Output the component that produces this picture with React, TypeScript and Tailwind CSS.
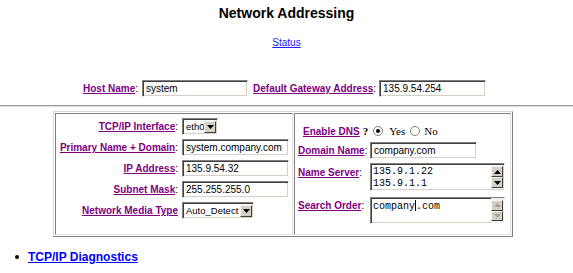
import React from "react";

const Label: React.FC<{ children: React.ReactNode }> = ({ children }) => (
  <a className="font-bold text-[#800080] underline underline-offset-[1px] cursor-pointer">{children}</a>
);

const Field: React.FC<{ className?: string; children?: React.ReactNode }> = ({ className = "", children }) => (
  <div
    className={
      "h-[17px] bg-white border border-t-[#808080] border-l-[#808080] border-b-white border-r-white shadow-[inset_1px_1px_0_#404040,inset_-1px_-1px_0_#d4d0c8] pl-[3px] text-[10px] leading-[15px] whitespace-nowrap overflow-hidden " +
      className
    }
  >
    {children}
  </div>
);

const ArrowBtn: React.FC<{ up?: boolean; disabled?: boolean }> = ({ up, disabled }) => (
  <div className="w-[12px] h-[12px] bg-[#d4d0c8] border border-t-[#f4f4f4] border-l-[#f4f4f4] border-b-[#404040] border-r-[#404040] flex items-center justify-center">
    <svg width="7" height="4" viewBox="0 0 7 4">
      {up ? (
        <path d="M0 4 L3.5 0 L7 4 Z" fill={disabled ? "#a0a0a0" : "#000"} />
      ) : (
        <path d="M0 0 L3.5 4 L7 0 Z" fill={disabled ? "#a0a0a0" : "#000"} />
      )}
    </svg>
  </div>
);

const Select: React.FC<{ className?: string; value: string }> = ({ className = "", value }) => (
  <div
    className={
      "h-[17px] bg-white border border-t-[#808080] border-l-[#808080] border-b-white border-r-white shadow-[inset_1px_1px_0_#404040,inset_-1px_-1px_0_#d4d0c8] flex items-center pl-[3px] pr-[1px] text-[9.5px] " +
      className
    }
  >
    <span className="flex-1 leading-[13px] whitespace-nowrap overflow-hidden">{value}</span>
    <ArrowBtn />
  </div>
);

const Radio: React.FC<{ checked?: boolean }> = ({ checked }) => (
  <span className="w-[10px] h-[10px] rounded-full bg-white border border-[#808080] flex items-center justify-center">
    {checked && <span className="w-[4px] h-[4px] rounded-full bg-black" />}
  </span>
);

const TextArea: React.FC<{ lines: React.ReactNode[]; className?: string; disabled?: boolean }> = ({ lines, className = "", disabled }) => (
  <div
    className={
      "w-[135px] bg-white border border-t-[#808080] border-l-[#808080] border-b-white border-r-white shadow-[inset_1px_1px_0_#404040,inset_-1px_-1px_0_#d4d0c8] flex " +
      className
    }
  >
    <div className="flex-1 pl-[2px] pt-[2px] font-['Liberation_Mono',monospace] text-[10px] leading-[12px]">
      {lines.map((l, i) => (
        <div key={i} className="whitespace-nowrap">{l}</div>
      ))}
    </div>
    <div className={"flex flex-col justify-between pr-[1px] py-[2px] " + (disabled ? "bg-[#f0f0f0]" : "")}>
      <ArrowBtn up disabled={disabled} />
      <ArrowBtn disabled={disabled} />
    </div>
  </div>
);

export default function App() {
  return (
    <div className="w-[573px] h-[273px] overflow-hidden bg-white text-black font-['Liberation_Sans',Arial,sans-serif]">
      <h1 className="pt-[5px] text-center text-[14px] leading-[16px] font-bold">Network Addressing</h1>
      <div className="mt-[16px] text-center text-[10px] leading-[12px]">
        <a className="text-[#2020ff] underline cursor-pointer">Status</a>
      </div>

      <div className="mt-[31px] flex items-center pl-[83px] text-[10px] h-[17px]">
        <span>
          <Label>Host Name</Label>:
        </span>
        <Field className="ml-[4px] w-[106px]">system</Field>
        <span className="ml-[5px]">
          <Label>Default Gateway Address</Label>:
        </span>
        <Field className="ml-[3px] w-[107px]">135.9.54.254</Field>
      </div>

      <div className="mt-[8px] h-[2px] border-t border-t-[#9a9a9a] border-b border-b-[#dcdcdc]" />

      <div className="mt-[4px] ml-[53px] w-[460px] h-[126px] p-px flex gap-px border border-t-[#d8d8d8] border-l-[#d8d8d8] border-b-[#808080] border-r-[#808080] text-[10px]">
        <div className="w-[238px] border border-t-[#808080] border-l-[#808080] border-b-[#e0e0e0] border-r-[#e0e0e0]">
          <div className="grid grid-cols-[126px_auto] gap-y-[4px] pt-[4px] items-center">
            <div className="text-right pr-[4px]">
              <Label>TCP/IP Interface</Label>:
            </div>
            <Select className="w-[36px]" value="eth0" />
            <div className="text-right pr-[4px]">
              <Label>Primary Name + Domain</Label>:
            </div>
            <Field className="w-[107px]">system.company.com</Field>
            <div className="text-right pr-[4px]">
              <Label>IP Address</Label>:
            </div>
            <Field className="w-[107px]">135.9.54.32</Field>
            <div className="text-right pr-[4px]">
              <Label>Subnet Mask</Label>:
            </div>
            <Field className="w-[107px]">255.255.255.0</Field>
            <div className="text-right pr-[4px]">
              <Label>Network Media Type</Label>
            </div>
            <Select className="w-[72px]" value="Auto_Detect" />
          </div>
        </div>

        <div className="flex-1 border border-t-[#808080] border-l-[#808080] border-b-[#e0e0e0] border-r-[#e0e0e0] pl-[3px]">
          <div className="mt-[8px] h-[18px] flex items-center pl-[5px]">
            <Label>Enable DNS</Label>
            <span className="ml-[3px] font-['Liberation_Serif',serif] font-bold text-[11px]">?</span>
            <span className="ml-[5px]">
              <Radio checked />
            </span>
            <span className="ml-[6px] font-['Liberation_Serif',serif] text-[11px]">Yes</span>
            <span className="ml-[5px]">
              <Radio />
            </span>
            <span className="ml-[4px] font-['Liberation_Serif',serif] text-[11px]">No</span>
          </div>
          <div className="mt-[2px] flex items-center">
            <div className="w-[72px]">
              <Label>Domain Name</Label>:
            </div>
            <Field className="w-[107px] h-[16px] leading-[14px]">company.com</Field>
          </div>
          <div className="mt-[4px] flex items-start">
            <div className="w-[72px] pt-[2px]">
              <Label>Name Server</Label>:
            </div>
            <TextArea className="h-[28px]" lines={["135.9.1.22", "135.9.1.1"]} />
          </div>
          <div className="mt-[6px] flex items-start">
            <div className="w-[72px] pt-[1px]">
              <Label>Search Order</Label>:
            </div>
            <TextArea
              className="h-[27px]"
              disabled
              lines={[
                <span>
                  company<span className="inline-block w-px h-[11px] bg-black align-[-2px]" />.com
                </span>,
              ]}
            />
          </div>
        </div>
      </div>

      <div className="mt-[13px] flex items-center pl-[15px] h-[14px]">
        <span className="w-[4px] h-[4px] rounded-full bg-black" />
        <a className="ml-[9px] text-[12px] font-bold text-[#0000ff] underline cursor-pointer">TCP/IP Diagnostics</a>
      </div>
    </div>
  );
}
